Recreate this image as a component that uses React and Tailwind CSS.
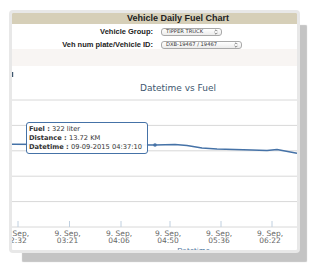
const ticks = [
  { x: 4, t: '02:32' },
  { x: 55.5, t: '03:21' },
  { x: 107, t: '04:06' },
  { x: 156, t: '04:50' },
  { x: 207, t: '05:36' },
  { x: 258, t: '06:22' },
]

const grid = [34, 59.4, 84.8, 110.2, 135.6, 161]

const Arrows = () => (
  <svg width="4" height="6" viewBox="0 0 4 6" className="shrink-0">
    <path d="M0.6 2.2 L2 0.8 L3.4 2.2 M0.6 3.8 L2 5.2 L3.4 3.8" fill="none" stroke="#555" strokeWidth="0.7" />
  </svg>
)

const Select = ({ value, width }) => (
  <div
    className={`h-[8px] ${width} flex items-center justify-between pl-[4px] pr-[3px] rounded-[3px] border border-[#a9a9a9] bg-gradient-to-b from-white to-[#ececec] text-[5.2px] leading-none font-normal text-[#333] font-['DejaVu_Sans',sans-serif]`}
  >
    <span>{value}</span>
    <Arrows />
  </div>
)

const FuelChart = () => (
  <div className="relative h-[184px] overflow-hidden">
    <svg width="285" height="184" viewBox="0 0 285 184" className="block">
      <rect x="0" y="6" width="1.2" height="5" fill="#3e576f" />
      <text x="166" y="25" textAnchor="middle" fontSize="9" fill="#3e576f" fontFamily="'DejaVu Sans', sans-serif">
        Datetime vs Fuel
      </text>
      {grid.map(y => (
        <line key={y} x1="0" x2="285" y1={y} y2={y} stroke="#d8d8d8" strokeWidth="1" />
      ))}
      {ticks.map(tk => (
        <line key={tk.t} x1={tk.x + 2} x2={tk.x + 2} y1="155" y2="161" stroke="#c0d0e0" strokeWidth="1" />
      ))}
      <polyline
        points="0,78.3 143,79 163,78.5 175,79.6 190,82 205,83 240,84 255,84.4 265,83.6 285,87.3"
        fill="none"
        stroke="#4572a7"
        strokeWidth="1.5"
        strokeLinejoin="round"
      />
      <circle cx="143" cy="79" r="1.8" fill="#4572a7" />
      {ticks.map(tk => (
        <text key={tk.t} textAnchor="middle" fontSize="7.5" fill="#666" fontFamily="'DejaVu Sans', sans-serif">
          <tspan x={tk.x} y="169.5">9. Sep,</tspan>
          <tspan x={tk.x} y="177">{tk.t}</tspan>
        </text>
      ))}
      <text x="181.5" y="187" textAnchor="middle" fontSize="7" fill="#4d759e" fontFamily="'DejaVu Sans', sans-serif">
        Datetime
      </text>
    </svg>

    {/* tooltip */}
    <div className="absolute left-[14px] top-[56px] w-[122px] h-[32px] rounded-[3px] border border-[#4572a7] bg-white/95 pl-[2px] pt-[2px] text-[6.7px] leading-[9px] text-[#333] font-['DejaVu_Sans',sans-serif] whitespace-nowrap">
      <div><b>Fuel :</b> 322 liter</div>
      <div><b>Distance :</b> 13.72 KM</div>
      <div><b>Datetime :</b> 09-09-2015 04:37:10</div>
    </div>
  </div>
)

const App = () => {
  return (
    <div className="min-h-screen bg-white pt-[10px] pl-[9px]">
      <div className="w-[291px] h-[243px] rounded-[4px] border-[3px] border-[#e8e8e8] bg-white overflow-hidden shadow-[10px_12px_1px_-3px_#c4c4c4] flex flex-col">
        <div className="h-[11px] shrink-0 bg-[#d6cfb8] pl-[47px] text-center text-[9px] leading-[11px] font-bold text-[#222] font-['Liberation_Sans',Arial,sans-serif]">
          Vehicle Daily Fuel Chart
        </div>

        <div className="pt-[3px] grid grid-cols-[141px_auto] gap-x-[8px] gap-y-[4px] text-[7.5px] font-bold text-[#222] font-['Liberation_Sans',Arial,sans-serif]">
          <div className="h-[9px] flex items-center justify-end">Vehicle Group:</div>
          <div className="h-[9px] flex items-center">
            <Select value="TIPPER TRUCK" width="w-[61px]" />
          </div>
          <div className="h-[9px] flex items-center justify-end">Veh num plate/Vehicle ID:</div>
          <div className="h-[9px] flex items-center">
            <Select value="DXB-19467 / 19467" width="w-[81px]" />
          </div>
        </div>

        <div className="h-[17px] shrink-0 bg-[#f8f5f3]" />

        <FuelChart />
      </div>
    </div>
  )
}

export default App
